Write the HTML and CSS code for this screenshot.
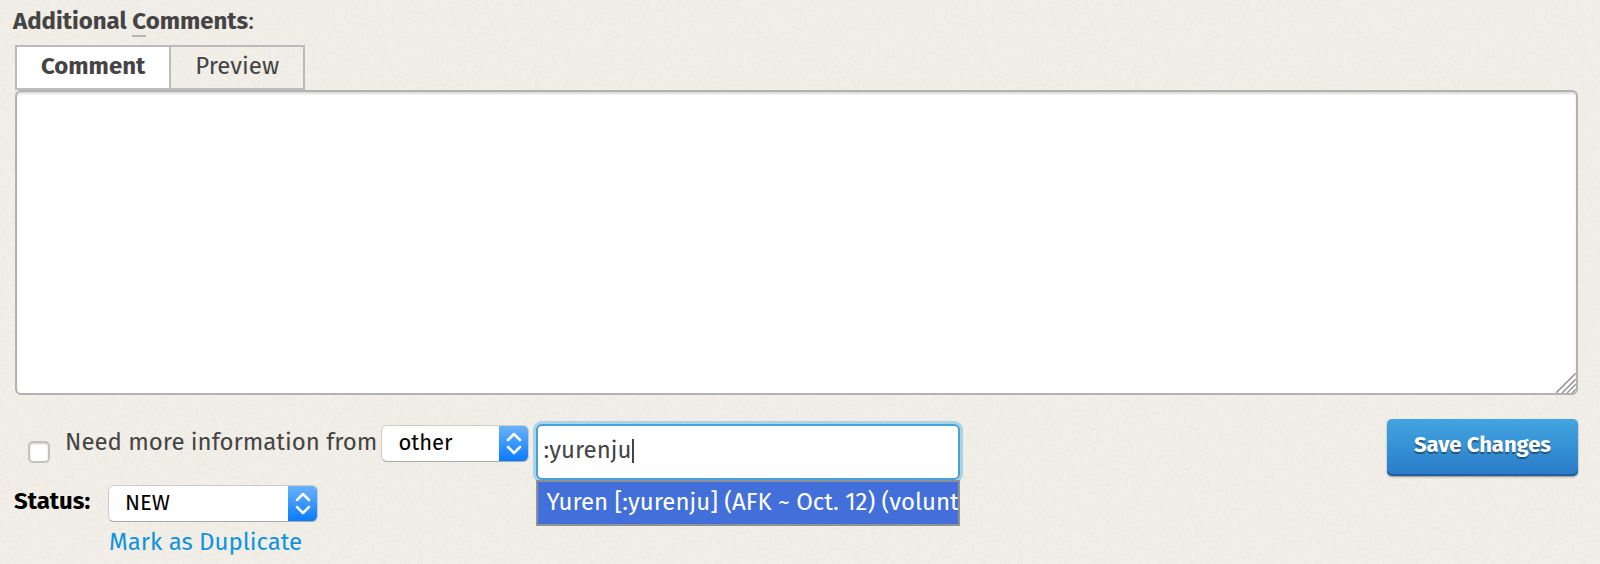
FILE: index.html
```html
<!DOCTYPE html>
<html lang="en">
  <head>
    <title>Additional Comments</title>
    <meta charset="UTF-8" />
    <link rel="stylesheet" href="styles.css">
  </head>
  <body>
    <form class="comment-form" action="" method="POST">
      <label class="comment-label" for="comment"
        ><b>Additional <span class="accesskey">C</span>omments</b>:</label
      >
      <div class="tabs">
        <button type="button" class="tab active">Comment</button>
        <button type="button" class="tab">Preview</button>
      </div>
      <textarea id="comment" class="comment" name="comment" accesskey="c"></textarea>

      <div class="form-footer">
        <div class="fields">
          <div class="needinfo">
            <input type="checkbox" id="needinfo" class="needinfo-check" />
            <label for="needinfo" class="needinfo-label"
              >Need more information from</label
            >
            <select class="select needinfo-role" aria-label="Role">
              <option>other</option>
            </select>
            <div class="user-search">
              <input
                type="text"
                class="user-input"
                aria-label="User"
                value=":yurenju"
              />
              <span class="caret"></span>
              <div class="suggestions">
                Yuren [:yurenju] (AFK ~ Oct. 12) (volunt
              </div>
            </div>
          </div>
          <div class="status">
            <label for="status" class="status-label">Status:</label>
            <select id="status" class="select status-select">
              <option>NEW</option>
            </select>
            <a href="#" class="duplicate">Mark as Duplicate</a>
          </div>
        </div>
        <button type="submit" class="save">Save Changes</button>
      </div>
    </form>
  </body>
</html>
```

FILE: styles.css
```css
* {
  box-sizing: border-box;
}

body {
  margin: 0;
  color: #444;
  font: 24px/32px "Fira Sans", "Noto Sans", sans-serif;
  background: #f2efe9
    url("data:image/svg+xml,%3Csvg xmlns='http://www.w3.org/2000/svg' width='300' height='300'%3E%3Cfilter id='n'%3E%3CfeTurbulence type='fractalNoise' baseFrequency='.25' numOctaves='2' stitchTiles='stitch'/%3E%3CfeColorMatrix values='0 0 0 0 .6 0 0 0 0 .57 0 0 0 0 .5 .3 0 0 0 -.11'/%3E%3C/filter%3E%3Crect width='300' height='300' filter='url(%23n)'/%3E%3C/svg%3E");
}

button,
input,
select,
textarea {
  font: inherit;
  color: inherit;
}

.comment-form {
  padding: 5px 22px 4px 15px;
}

.comment-label {
  display: block;
  margin: 0 0 8px -2px;
}

.accesskey {
  border-bottom: 2px solid #b5b5b5;
}

.tabs {
  display: flex;
}

.tab {
  height: 45px;
  padding: 0 24px 4px;
  border: 2px solid #bbb;
  background: transparent;
}

.tab + .tab {
  margin-left: -2px;
}

.tab.active {
  background: #fff;
  font-weight: bold;
}

.comment {
  display: block;
  width: 100%;
  height: 305px;
  padding: 8px;
  border: 2px solid #b2b2b2;
  border-radius: 6px;
  outline: 0;
  resize: none;
  background: #fff
    url("data:image/svg+xml,%3Csvg xmlns='http://www.w3.org/2000/svg' width='20' height='20'%3E%3Cpath d='M0 20L20 0M6 20L20 6M11 20l9-9M16 20l4-4' stroke='%23999' stroke-width='1.6'/%3E%3C/svg%3E")
    no-repeat right bottom;
  box-shadow: inset 0 2px 2px #ddd;
}

.form-footer {
  display: flex;
  justify-content: space-between;
  align-items: flex-start;
  padding-top: 24px;
}

.needinfo {
  display: flex;
  align-items: flex-start;
  padding: 5px 0 0 13px;
}

.needinfo-check {
  appearance: none;
  width: 22px;
  height: 22px;
  margin: 17px 15px 0 0;
  border: 2px solid #c4c2bf;
  border-radius: 5px;
  background: #fff;
  box-shadow: inset 0 1px 2px #ccc;
}

.needinfo-label {
  margin: 2px 4px 0 0;
}

.select {
  appearance: none;
  height: 37px;
  padding: 0 40px 1px 16px;
  border: 1px solid #ccc;
  border-bottom-color: #aaa;
  border-radius: 6px;
  color: #000;
  font-size: 22px;
  background: #fff
    url("data:image/svg+xml,%3Csvg xmlns='http://www.w3.org/2000/svg' width='30' height='37'%3E%3ClinearGradient id='g' x2='0' y2='1'%3E%3Cstop stop-color='%236cb3fa'/%3E%3Cstop offset='1' stop-color='%23067aff'/%3E%3C/linearGradient%3E%3Cpath d='M0 0h24q6 0 6 6v25q0 6-6 6H0z' fill='url(%23g)'/%3E%3Cpath d='M9 15l6-6 6 6M9 22l6 6 6-6' fill='none' stroke='%23fff' stroke-width='2.5' stroke-linecap='round' stroke-linejoin='round'/%3E%3C/svg%3E")
    no-repeat right top;
  background-origin: border-box;
  background-clip: border-box;
}

.needinfo-role {
  width: 148px;
  margin: 1px 7px 0 0;
}

.user-search {
  position: relative;
  width: 424px;
}

.user-input {
  display: block;
  width: 100%;
  height: 56px;
  padding: 0 5px 4px;
  border: 2px solid #45a1de;
  border-radius: 6px;
  outline: 0;
  background: #fff;
  box-shadow: 0 0 0 3px #abd3e5;
}

.caret {
  position: absolute;
  top: 15px;
  left: 96px;
  width: 2px;
  height: 24px;
  background: #444;
}

.suggestions {
  position: absolute;
  top: 56px;
  left: 0;
  width: 100%;
  height: 46px;
  padding: 4px 0 0 8px;
  border: 2px solid #8e9196;
  overflow: hidden;
  white-space: nowrap;
  color: #fff;
  background: #426fd9;
}

.status {
  display: grid;
  grid-template-columns: 93px 210px;
  row-gap: 4px;
  margin-top: 5px;
}

.status-label {
  margin-left: -1px;
  color: #000;
  font-weight: bold;
}

.duplicate {
  grid-column: 2;
  margin-left: 1px;
  color: #0f93dc;
  text-decoration: none;
}

.save {
  height: 57px;
  padding: 0 27px 6px;
  border: 0;
  border-radius: 5px;
  color: #fff;
  font-size: 22px;
  font-weight: bold;
  text-shadow: 0 2px 1px rgba(0, 0, 0, 0.4);
  background: linear-gradient(#42a5e1, #2a7bc8);
  box-shadow: inset 0 -2px #205f9b, 0 1px 2px rgba(0, 0, 0, 0.4);
}
```
